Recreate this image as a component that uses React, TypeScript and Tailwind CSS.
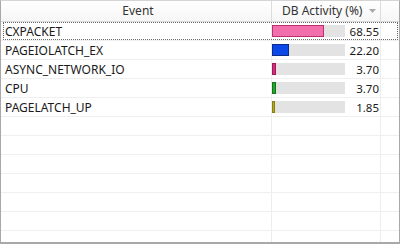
type Wait = {
  name: string;
  pct: string;
  bar: number;
  fill: string;
};

const waits: Wait[] = [
  { name: 'CXPACKET', pct: '68.55', bar: 52, fill: 'bg-[#f26fae] border-[#b8306c]' },
  { name: 'PAGEIOLATCH_EX', pct: '22.20', bar: 17, fill: 'bg-[#0c48e8] border-[#0a2a8c]' },
  { name: 'ASYNC_NETWORK_IO', pct: '3.70', bar: 4, fill: 'bg-[#d42a7e] border-[#a01858]' },
  { name: 'CPU', pct: '3.70', bar: 4, fill: 'bg-[#22a52a] border-[#14781a]' },
  { name: 'PAGELATCH_UP', pct: '1.85', bar: 3, fill: 'bg-[#b4aa1e] border-[#8a8010]' },
];

function Row({ item, focused }: { item?: Wait; focused?: boolean }) {
  return (
    <div className="relative grid h-[19px] shrink-0 grid-cols-[271px_109px_1fr] border-b border-[#efefef]">
      <div className="flex items-center border-r border-[#ededed] pl-[4px] pt-[1px] text-[#1a1a1a]">
        {item?.name}
      </div>
      <div className="flex items-center border-r border-[#ededed]">
        {item && (
          <>
            <div className="flex h-[12px] w-[73px] bg-[#e3e3e3]">
              <div
                className={`h-full border ${item.fill}`}
                style={{ width: item.bar }}
              />
            </div>
            <div className="flex-1 pr-[1px] pt-[1px] text-right text-[11.5px] text-[#1a1a1a]">{item.pct}</div>
          </>
        )}
      </div>
      <div />
      {focused && (
        <div className="pointer-events-none absolute top-0 bottom-0 left-[2px] right-[1px] border border-dotted border-[#6a6a6a]" />
      )}
    </div>
  );
}

export default function App() {
  const empty = Array.from({ length: 7 });

  return (
    <div className="h-[244px] w-[400px] overflow-hidden bg-white font-['Segoe_UI','Noto_Sans',sans-serif] text-[12px] leading-none">
      <div className="flex h-[244px] flex-col overflow-hidden border-x border-t border-b-2 border-x-[#a8a8a8] border-t-[#d4d4d4] border-b-[#a8a8a8]">
        <div className="grid h-[21px] shrink-0 grid-cols-[271px_109px_1fr] border-b border-[#d8d8d8] bg-gradient-to-b from-white to-[#f6f6f6] text-[#333]">
          <div className="flex items-center justify-center border-r border-[#dcdcdc] pl-[4px]">Event</div>
          <div className="flex items-center border-r border-[#dcdcdc] pl-[10px]">
            <span>DB Activity (%)</span>
            <svg className="ml-auto mr-[4px]" width="7" height="4" viewBox="0 0 7 4">
              <path d="M0 0h7L3.5 4z" fill="#a9a9a9" />
            </svg>
          </div>
          <div />
        </div>
        {waits.map((w, i) => (
          <Row key={w.name} item={w} focused={i === 0} />
        ))}
        {empty.map((_, i) => (
          <Row key={i} />
        ))}
      </div>
    </div>
  );
}
